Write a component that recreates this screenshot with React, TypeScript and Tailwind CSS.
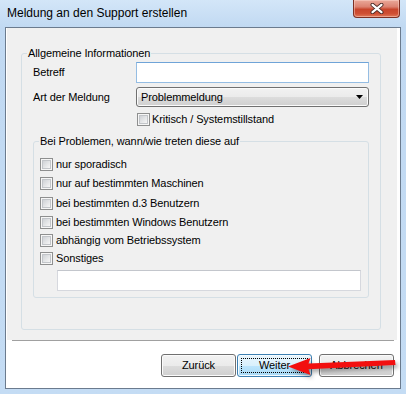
import React from "react";

function CheckBox() {
  return (
    <span className="flex h-[13px] w-[13px] shrink-0 items-center justify-center border border-[#8e8f8f] bg-[#f6f6f6]">
      <span className="h-[9px] w-[9px] border border-[#c2c5c9] bg-[linear-gradient(135deg,#cfd2d6,#f6f6f6)]" />
    </span>
  );
}

function CheckRow({ label, h }: { label: string; h: string }) {
  return (
    <div className={`flex items-center gap-[3px] ${h}`}>
      <CheckBox />
      <span className="leading-[13px]">{label}</span>
    </div>
  );
}

const btnBase =
  "flex h-[23px] w-[75px] items-center justify-center rounded-[3px] border leading-[13px]";
const btnGrey =
  "border-[#707070] bg-[linear-gradient(#f2f2f2,#ebebeb_50%,#dddddd_50%,#cfcfcf)] shadow-[inset_0_0_0_1px_#fbfbfb]";

export default function App() {
  const reasons = [
    { label: "nur sporadisch", h: "h-[19px]" },
    { label: "nur auf bestimmten Maschinen", h: "h-[19px]" },
    { label: "bei bestimmten d.3 Benutzern", h: "h-[20px]" },
    { label: "bei bestimmten Windows Benutzern", h: "h-[18px]" },
    { label: "abhängig vom Betriebssystem", h: "h-[18px]" },
    { label: "Sonstiges", h: "h-[18px]" },
  ];

  return (
    <div className="relative flex h-[394px] w-[406px] flex-col bg-[linear-gradient(180deg,#d3e6f8_0px,#c1d9f2_27px,#c4dcf4_100%)] px-[5px] pb-[5px] font-['Liberation_Sans',Arial,sans-serif] text-[11px] tracking-[-0.1px] text-black">
      {/* title bar */}
      <div className="flex h-[27px] shrink-0 items-start justify-between">
        <div className="pl-[2px] pt-[6px] text-[12px] leading-[14px] tracking-normal">
          Meldung an den Support erstellen
        </div>
        <div className="mr-[1px] flex h-[18px] w-[47px] items-center justify-center rounded-b-[4px] border border-t-0 border-[#7d3024] bg-[linear-gradient(#eaa99a,#dc8271_40%,#c8452c_55%,#cf4f34_80%,#e0795a)] shadow-[inset_0_0_0_1px_rgba(255,220,210,0.45)]">
          <svg width="14" height="11" viewBox="0 0 14 11">
            <path d="M2.5 1.8 L11.5 9.2 M11.5 1.8 L2.5 9.2" stroke="#4a2a26" strokeWidth="4" strokeLinecap="round" />
            <path d="M2.5 1.8 L11.5 9.2 M11.5 1.8 L2.5 9.2" stroke="#ffffff" strokeWidth="2.2" strokeLinecap="round" />
          </svg>
        </div>
      </div>

      {/* client area */}
      <div className="flex flex-1 flex-col border border-[#6b7b8e] bg-white">
        <div className="ml-[1px] mr-[3px] flex h-[312px] flex-col bg-[#f0f0f0]">
          <fieldset className="ml-[14px] mr-[16px] mt-[19px] rounded-[3px] border border-[#d5dfe5] px-[11px] pb-[31px]">
            <legend className="-ml-[6px] px-[1px] leading-[12px]">Allgemeine Informationen</legend>

            <div className="mt-[3px] flex h-[21px] items-center">
              <span className="w-[103px] shrink-0">Betreff</span>
              <div className="h-[21px] flex-1 border border-[#95bde3] border-t-[#6fa4d8] bg-white" />
            </div>

            <div className="mt-[4px] flex h-[20px] items-center">
              <span className="w-[103px] shrink-0">Art der Meldung</span>
              <div className={`flex h-[20px] flex-1 items-center justify-between rounded-[3px] border pl-[4px] pr-[5px] ${btnGrey}`}>
                <span className="leading-[13px]">Problemmeldung</span>
                <svg width="7" height="4" viewBox="0 0 7 4">
                  <path d="M0 0 L7 0 L3.5 4 Z" fill="#000" />
                </svg>
              </div>
            </div>

            <div className="ml-[104px] mt-[6px] flex h-[13px] items-center gap-[2px]">
              <CheckBox />
              <span className="leading-[13px]">Kritisch / Systemstillstand</span>
            </div>

            <fieldset className="mt-[9px] rounded-[3px] border border-[#d5dfe5] pb-[6px] pl-[6px]">
              <legend className="-ml-[1px] px-[1px] leading-[12px]">
                Bei Problemen, wann/wie treten diese auf
              </legend>
              <div className="flex flex-col pt-[8px]">
                {reasons.map((r) => (
                  <CheckRow key={r.label} label={r.label} h={r.h} />
                ))}
              </div>
              <div className="ml-[17px] mr-[7px] mt-[3px] h-[21px] border border-[#d6d8de] border-t-[#c3c6cc] bg-white" />
            </fieldset>
          </fieldset>
        </div>

        <div className="mx-[6px] h-px bg-[#a0a0a0]" />

        <div className="mt-[13px] flex justify-end pr-[6px]">
          <button className={`${btnBase} ${btnGrey}`}>Zurück</button>
          <button
            className={`${btnBase} relative ml-[1px] border-[#3c7fb1] bg-[linear-gradient(#eaf6fd,#d9f0fc_50%,#bee6fd_50%,#a7d9f5)] shadow-[inset_0_0_0_1px_#f4fbff]`}
          >
            <span className="absolute inset-[3px] border border-dotted border-black" />
            Weiter
          </button>
          <button className={`${btnBase} ${btnGrey} ml-[7px]`}>Abbrechen</button>
        </div>
      </div>

      {/* red annotation arrow */}
      <svg
        className="absolute left-[284px] top-[350px] drop-shadow-[2px_3px_2px_rgba(0,0,0,0.35)]"
        width="120"
        height="32"
        viewBox="0 0 120 32"
      >
        <path d="M4 16.5 L26.5 8 L24.5 13.5 L111 10 L111.5 15 L24.5 19.2 L26.5 25 Z" fill="#f20f0f" />
      </svg>
    </div>
  );
}
